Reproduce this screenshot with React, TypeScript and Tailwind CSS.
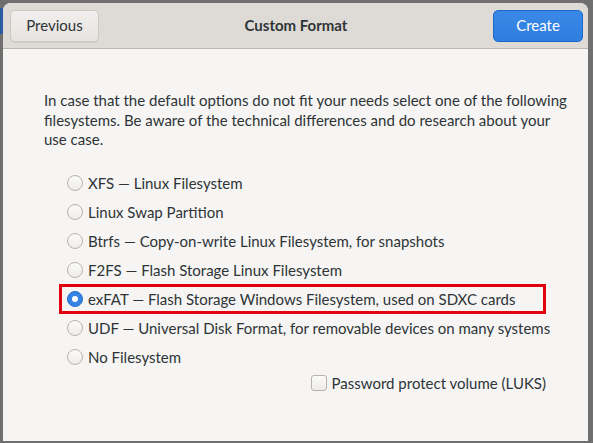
import { useState } from 'react';

const options = [
    { id: 'xfs', label: 'XFS — Linux Filesystem' },
    { id: 'swap', label: 'Linux Swap Partition' },
    { id: 'btrfs', label: 'Btrfs — Copy-on-write Linux Filesystem, for snapshots' },
    { id: 'f2fs', label: 'F2FS — Flash Storage Linux Filesystem' },
    { id: 'exfat', label: 'exFAT — Flash Storage Windows Filesystem, used on SDXC cards' },
    { id: 'udf', label: 'UDF — Universal Disk Format, for removable devices on many systems' },
    { id: 'none', label: 'No Filesystem' },
];

export default function App() {
    const [selected, setSelected] = useState('exfat');
    const [luks, setLuks] = useState(false);

    return (
        <div
            className="w-[593px] h-[443px] bg-[#6f6f6f] pt-[3px] pl-[3px] pr-[5px] pb-[2px] relative overflow-hidden"
            style={{ fontFamily: 'Lato, "Noto Sans", sans-serif' }}
        >
            {/* bits of the window behind */}
            <div className="absolute left-0 top-[8px] w-[3px] h-[26px] bg-[#2a5d9f]" />

            <div className="h-full flex flex-col rounded-t-[8px] overflow-hidden bg-[#f6f5f4]">
                <div className="h-[46px] shrink-0 bg-[#dedbd7] border-b border-[#bdb7b1] pl-[7px] pr-[5px] flex items-center justify-between">
                    <button className="w-[89px] h-[32px] rounded-[5px] border border-[#cdc7c2] bg-gradient-to-b from-[#f1efed] to-[#e6e3e0] text-[15px] text-[#2e3436] shadow-[0_1px_0_rgba(0,0,0,0.05)]">
                        Previous
                    </button>
                    <div className="text-[15px] font-bold text-[#2e3436]">Custom Format</div>
                    <button className="w-[90px] h-[32px] rounded-[5px] border border-[#1b6acb] bg-gradient-to-b from-[#3a88e6] to-[#2f7ee0] text-[15px] text-white">
                        Create
                    </button>
                </div>

                <div className="flex-1 pt-[42px]">
                    <p className="pl-[41px] pr-[6px] text-[15px] leading-[19.5px] text-[#2e3436]">
                        In case that the default options do not fit your needs select one of the following
                        <br />
                        filesystems. Be aware of the technical differences and do research about your
                        <br />
                        use case.
                    </p>

                    <div className="mt-[19px] pl-[64px] flex flex-col">
                        {options.map((o) => (
                            <label
                                key={o.id}
                                className="relative h-[29px] flex items-center gap-[5px] text-[15px] text-[#2e3436] cursor-pointer"
                                onClick={() => setSelected(o.id)}
                            >
                                {selected === o.id ? (
                                    <span className="w-[16px] h-[16px] shrink-0 rounded-full bg-[#3584e4] border border-[#1c6fd4] flex items-center justify-center">
                                        <span className="w-[6px] h-[6px] rounded-full bg-white" />
                                    </span>
                                ) : (
                                    <span className="w-[16px] h-[16px] shrink-0 rounded-full border border-[#b9b3ad] bg-gradient-to-b from-[#fbfbfa] to-[#eeecea]" />
                                )}
                                <span className="whitespace-nowrap">{o.label}</span>
                                {o.id === 'exfat' && (
                                    <span className="absolute left-[-8px] top-[-1px] w-[487px] h-[30px] border-[3px] border-[#e3000f] pointer-events-none" />
                                )}
                            </label>
                        ))}
                    </div>

                    <div className="mt-0 pr-[42px] flex justify-end">
                        <label
                            className="flex items-center gap-[5px] text-[15px] text-[#2e3436] cursor-pointer"
                            onClick={() => setLuks(!luks)}
                        >
                            <span className="w-[16px] h-[16px] shrink-0 rounded-[3px] border border-[#b9b3ad] bg-gradient-to-b from-[#fbfbfa] to-[#eeecea]" />
                            <span>Password protect volume (LUKS)</span>
                        </label>
                    </div>
                </div>
            </div>
        </div>
    );
}
